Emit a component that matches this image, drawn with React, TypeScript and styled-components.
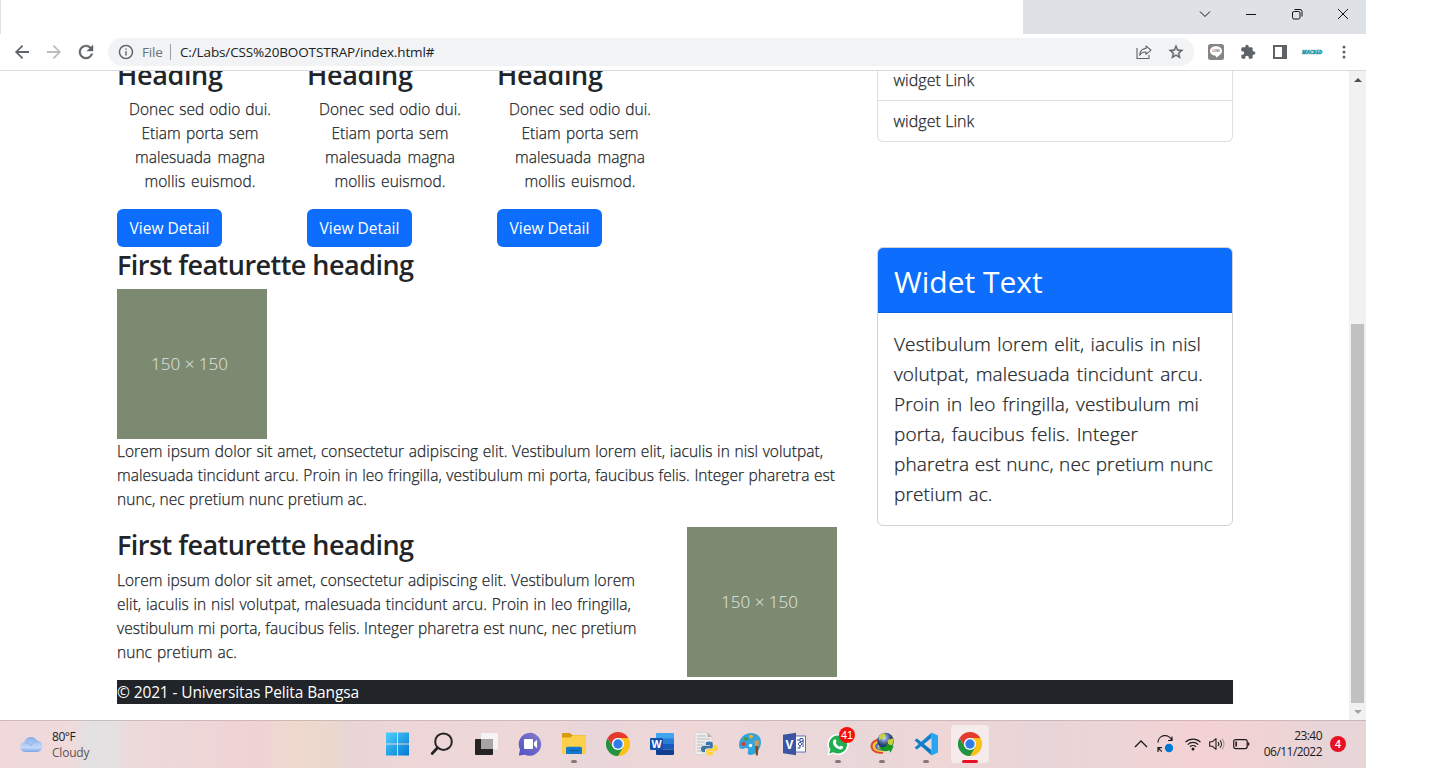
import React from 'react';
import styled, { createGlobalStyle, css } from 'styled-components';

const GlobalStyle = createGlobalStyle`
  *, *::before, *::after { box-sizing: border-box; }
  html, body { margin: 0; background: #fff; overflow: hidden; }
  body { font-family: 'Open Sans', 'Noto Sans', sans-serif; color: #212529; }
  h2, h3, p { margin: 0; }
  svg { display: block; flex: none; }
`;

const Screen = styled.div`
  width: 1366px;
  height: 768px;
  display: flex;
  flex-direction: column;
  overflow: hidden;
`;

/* ---------- browser chrome ---------- */

const TitleBar = styled.div`
  height: 34px;
  flex: none;
  display: flex;
  justify-content: space-between;
  background: #dee1e6;
  padding-left: 1px;
`;

const TabArea = styled.div`
  width: 1022px;
  background: #fff;
`;

const WindowControls = styled.div`
  display: flex;
  height: 28px;
`;

const WindowButton = styled.div`
  width: 46px;
  display: flex;
  align-items: center;
  justify-content: center;
`;

const Toolbar = styled.div`
  height: 37px;
  flex: none;
  display: flex;
  align-items: center;
  padding: 0 6px;
  border-bottom: 1px solid #d9dadb;
`;

const ToolButton = styled.div`
  width: 32px;
  height: 32px;
  display: flex;
  align-items: center;
  justify-content: center;
`;

const AddressBar = styled.div`
  width: 1086px;
  height: 28px;
  margin: 0 6px;
  padding: 0 2px 0 9px;
  border-radius: 14px;
  background: #f1f3f4;
  display: flex;
  align-items: center;
  font-size: 14px;
`;

const Scheme = styled.span`
  margin-left: 7px;
  width: 28px;
  color: #6b7075;
  font-size: 13.5px;
  letter-spacing: -0.15px;
`;

const Divider = styled.span`
  width: 1px;
  height: 16px;
  margin-right: 9px;
  background: #9a9da1;
`;

const Url = styled.span`
  flex: 1;
  color: #202124;
  font-size: 13.5px;
  letter-spacing: -0.13px;
`;

/* ---------- page ---------- */

const Viewport = styled.div`
  height: 649px;
  flex: none;
  display: flex;
  overflow: hidden;
`;

const Page = styled.div`
  width: 1349px;
  padding: 0 116px 0 117px;
  overflow: hidden;
`;

const Columns = styled.div`
  display: flex;
  justify-content: space-between;
  height: 609px;
`;

const Main = styled.div`
  width: 720px;
  margin-top: -15.6px;
`;

const Aside = styled.div`
  width: 356px;
`;

const Heading = styled.h3<{ $low?: boolean }>`
  height: 41.6px;
  padding-top: ${p => (p.$low ? '3px' : '1px')};
  font-size: 27px;
  line-height: 34px;
  font-weight: 600;
  letter-spacing: ${p => (p.$low ? '-0.35px' : '-0.53px')};
  white-space: nowrap;
`;

const Teasers = styled.div`
  display: flex;
  gap: 24px;
`;

const Teaser = styled.div`
  width: 166px;
`;

const TeaserText = styled.p`
  margin-bottom: 16px;
  display: flex;
  flex-direction: column;
  align-items: center;
`;

const Paragraph = styled.p`
  display: flex;
  flex-direction: column;
`;

const Line = styled.span<{ $width: number; $large?: boolean }>`
  width: ${p => p.$width}px;
  font-weight: 300;
  -webkit-text-stroke: 0.25px #212529;
  text-align: justify;
  text-align-last: justify;
  color: #212529;
  ${p => p.$large
    ? css`height: 30px; font-size: 19px; line-height: 30px; letter-spacing: 0.12px;`
    : css`height: 24px; font-size: 15.5px; line-height: 24px; letter-spacing: 0.04px;`}
`;

const Button = styled.button`
  width: 105px;
  height: 38px;
  display: block;
  padding: 0;
  border: 0;
  border-radius: 6px;
  background: #0d6efd;
  color: #fff;
  font: 400 15.5px/24px 'Open Sans', sans-serif;
`;

const Placeholder = styled.div`
  width: 150px;
  height: 150px;
  flex: none;
  display: flex;
  align-items: center;
  justify-content: center;
  padding: 0 5px 1px 0;
  background: #7d8a72;
  color: #e4e8e0;
  font-size: 17px;
  font-weight: 300;
`;

const Featurette = styled.article`
  display: flex;
  justify-content: space-between;
  margin-top: 16px;
`;

const LinkList = styled.div`
  height: 71px;
  border: 1px solid #dfdfdf;
  border-top: 0;
  border-radius: 0 0 6px 6px;
  overflow: hidden;
`;

const LinkItem = styled.div<{ $clipped?: boolean }>`
  height: 41px;
  padding: 8px 15.5px;
  margin-top: ${p => (p.$clipped ? '-11px' : '0')};
  border-bottom: ${p => (p.$clipped ? '1px solid #dfdfdf' : '0')};
  font-size: 16px;
  line-height: 24px;
  font-weight: 300;
  letter-spacing: 0.05px;
  -webkit-text-stroke: 0.25px #212529;
`;

const Card = styled.section`
  margin-top: 105px;
  height: 279px;
  border: 1px solid #d0d1d3;
  border-radius: 6px;
  overflow: hidden;
`;

const CardHeader = styled.h2`
  height: 65px;
  padding: 15px 16px 0;
  background: #0d6efd;
  border-bottom: 1px solid #0c5fd9;
  color: #fff;
  font-size: 30px;
  line-height: 38px;
  font-weight: 400;
`;

const CardBody = styled.div`
  padding: 16px 16px 0;
`;

const Footer = styled.footer`
  height: 24px;
  background: #212529;
  color: #fff;
  font-size: 15.5px;
  line-height: 24px;
  letter-spacing: -0.13px;
`;

const Scrollbar = styled.div`
  width: 17px;
  background: #f1f1f1;
  display: flex;
  flex-direction: column;
  align-items: center;
`;

const ScrollArrow = styled.div`
  height: 17px;
  display: flex;
  align-items: center;
`;

const ScrollTrack = styled.div`
  flex: 1;
  width: 13px;
  display: flex;
  align-items: flex-end;
`;

const ScrollThumb = styled.div`
  width: 13px;
  height: 379px;
  background: #c1c1c1;
`;

/* ---------- taskbar ---------- */

const Taskbar = styled.div`
  height: 48px;
  flex: none;
  display: flex;
  align-items: center;
  background: linear-gradient(90deg, #f0d8db 0, #efdadc 72px, #e3e1e1 88px, #e3e1e1 112px, #ecdadb 128px, #eed6d7 200px,
    #efd2d4 255px, #efd8cf 285px, #ebd9cd 325px, #e8d5d5 350px, #eed6d7 400px, #edd7d8 520px, #e9d6d8 600px, #efd7d8 690px, #e9d7d9 850px,
    #eed6d6 940px, #e8d5d7 1040px, #ecd5d6 1120px, #f4d2d4 1200px, #f0d3d4 1260px, #e7d5d7 1330px, #e7d5d7 1366px);
  box-shadow: inset 0 1px 0 rgba(150, 130, 135, 0.35);
`;

const Weather = styled.div`
  width: 376px;
  height: 100%;
  padding-left: 19px;
  display: flex;
  align-items: center;
  gap: 8px;
`;

const WeatherText = styled.div`
  display: flex;
  flex-direction: column;
  font-size: 12px;
  line-height: 16px;
  letter-spacing: -0.45px;
  color: #1b1b1b;
  padding-top: 2px;
`;

const Muted = styled.span`
  color: #5c5456;
  letter-spacing: -0.2px;
`;

const Apps = styled.div`
  width: 616px;
  display: flex;
`;

const AppCell = styled.div`
  width: 44px;
  height: 48px;
  display: flex;
  align-items: center;
  justify-content: center;
`;

const AppTile = styled.div<{ $active?: boolean }>`
  position: relative;
  width: 38px;
  height: 38px;
  border-radius: 4px;
  display: flex;
  align-items: center;
  justify-content: center;
  background: ${p => (p.$active ? '#f5ebeb' : 'transparent')};
`;

const Indicator = styled.span<{ $active?: boolean }>`
  position: absolute;
  bottom: 0;
  left: ${p => (p.$active ? '11px' : '16px')};
  width: ${p => (p.$active ? '16px' : '6px')};
  height: 3px;
  border-radius: 2px;
  background: ${p => (p.$active ? '#e81123' : '#85797b')};
`;

const CountBadge = styled.span`
  position: absolute;
  top: 2px;
  left: 20px;
  width: 16px;
  height: 16px;
  border-radius: 50%;
  background: #f5100c;
  color: #fff;
  font-size: 11px;
  line-height: 16px;
  text-align: center;
  font-family: 'Liberation Sans', sans-serif;
`;

const Tray = styled.div`
  flex: 1;
  display: flex;
  align-items: center;
  justify-content: flex-end;
  padding-right: 20px;
`;

const TrayIcons = styled.div`
  display: flex;
  align-items: center;
  gap: 8px;
  margin-right: 12px;
`;

const SyncStatus = styled.div`
  margin-right: 3px;
`;

const Clock = styled.div`
  width: 60px;
  display: flex;
  flex-direction: column;
  align-items: flex-end;
  font-size: 12px;
  line-height: 16px;
  letter-spacing: -0.55px;
  color: #1b1b1b;
`;

const Notice = styled.span`
  width: 16px;
  height: 16px;
  margin-left: 8px;
  border-radius: 50%;
  background: #e81123;
  color: #fff;
  font-size: 11px;
  font-weight: 600;
  line-height: 16px;
  text-align: center;
`;

/* ---------- icons ---------- */

interface GlyphProps { d: string; size: number; box?: number; fill?: string; weight?: number }

const Glyph = ({ d, size, box = 24, fill = '#5f6368', weight = 0 }: GlyphProps) => (
  <svg width={size} height={size} viewBox={`${12 - box / 2} ${12 - box / 2} ${box} ${box}`} fill={fill} stroke={fill} strokeWidth={weight}>
    <path d={d} />
  </svg>
);

const BACK = 'M20 11H7.83l5.59-5.59L12 4l-8 8 8 8 1.41-1.41L7.83 13H20v-2z';
const FORWARD = 'M12 4l-1.41 1.41L16.17 11H4v2h12.17l-5.58 5.59L12 20l8-8z';
const RELOAD = 'M17.65 6.35C16.2 4.9 14.21 4 12 4c-4.42 0-7.99 3.58-7.99 8s3.57 8 7.99 8c3.73 0 6.84-2.55 7.73-6h-2.08c-.82 2.33-3.04 4-5.65 4-3.31 0-6-2.69-6-6s2.69-6 6-6c1.66 0 3.14.69 4.22 1.78L13 11h7V4l-2.35 2.35z';
const INFO = 'M11 7h2v2h-2zm0 4h2v6h-2zm1-9C6.48 2 2 6.48 2 12s4.48 10 10 10 10-4.48 10-10S17.52 2 12 2zm0 18c-4.41 0-8-3.59-8-8s3.59-8 8-8 8 3.59 8 8-3.59 8-8 8z';
const STAR = 'M22 9.24l-7.19-.62L12 2 9.19 8.63 2 9.24l5.46 4.73L5.82 21 12 17.27 18.18 21l-1.63-7.03L22 9.24zM12 15.4l-3.76 2.27 1-4.28-3.32-2.88 4.38-.38L12 6.1l1.71 4.04 4.38.38-3.32 2.88 1 4.28L12 15.4z';
const PUZZLE = 'M20.5 11H19V7c0-1.1-.9-2-2-2h-4V3.5C13 2.12 11.88 1 10.5 1S8 2.12 8 3.5V5H4c-1.1 0-1.99.9-1.99 2v3.8H3.5c1.49 0 2.7 1.21 2.7 2.7s-1.21 2.7-2.7 2.7H2V20c0 1.1.9 2 2 2h3.8v-1.5c0-1.49 1.21-2.7 2.7-2.7 1.49 0 2.7 1.21 2.7 2.7V22H17c1.1 0 2-.9 2-2v-4h1.5c1.38 0 2.5-1.12 2.5-2.5S21.88 11 20.5 11z';

const ShareIcon = () => (
  <svg width="16" height="16" viewBox="0 0 16 16" fill="none" stroke="#5f6368" strokeWidth="1.1">
    <path d="M1 4v10.5h12V11" />
    <path d="M10 2l5 4.200-5 4.200V8C7 8 4.800 9 3.600 11.300 4 7.200 6 4.800 10 4.400z" strokeLinejoin="round" />
  </svg>
);

const LineIcon = () => (
  <svg width="16" height="16" viewBox="0 0 16 16">
    <rect width="16" height="16" rx="2.500" fill="#858585" />
    <path d="M8 2.200c3.400 0 6 2.100 6 4.700 0 2.700-3 4.700-5.200 6.400-.5.400-1 .2-.8-.4.200-.7 0-1.100-.6-1.200C4.300 11.300 2 9.400 2 6.900c0-2.600 2.600-4.700 6-4.700z" fill="#fff" />
    <text x="8" y="8.200" fontSize="3.400" fontWeight="700" fill="#808080" textAnchor="middle">LINE</text>
  </svg>
);

const PanelIcon = () => (
  <svg width="14" height="14" viewBox="0 0 14 14">
    <path d="M0 0h14v14H0zM2 2v10h7V2z" fill="#5f6368" fillRule="evenodd" />
  </svg>
);

const BrandIcon = () => (
  <svg width="26" height="10" viewBox="0 0 26 10">
    <text x="3" y="7" fontSize="5.500" fontWeight="800" fontStyle="italic" fill="#12b6c4" stroke="#1b8ba0" strokeWidth=".4" textLength="20" lengthAdjust="spacingAndGlyphs">MACBED</text>
  </svg>
);

const MenuIcon = () => (
  <svg width="4" height="14" viewBox="0 0 4 14" fill="#5f6368">
    <circle cx="2" cy="2" r="1.500" /><circle cx="2" cy="7" r="1.500" /><circle cx="2" cy="12" r="1.500" />
  </svg>
);

const ControlIcon = ({ d }: { d: string }) => (
  <svg width="12" height="12" viewBox="0 0 12 12" fill="none" stroke="#111" strokeWidth="1"><path d={d} /></svg>
);

const CONTROLS = [
  'M1 3.500l5 5 5-5',
  'M1 6.500h10',
  'M3.500 3.500h-.5a1.500 1.500 0 0 0-1.500 1.500v4.500A1.500 1.500 0 0 0 3 11h4.500A1.500 1.500 0 0 0 9 9.500V5a1.500 1.500 0 0 0-1.500-1.500zM3.500 1.500h5.500A2 2 0 0 1 11 3.500v5',
  'M1 1l10 10M11 1L1 11',
];

const CloudIcon = () => (
  <svg width="25" height="18" viewBox="0 0 25 18">
    <defs>
      <linearGradient id="cloud" x1="0" y1="0" x2="0" y2="1">
        <stop offset="0" stopColor="#86aeea" /><stop offset=".7" stopColor="#c2d9f9" /><stop offset="1" stopColor="#7fa6e4" />
      </linearGradient>
    </defs>
    <path d="M6 17a5 5 0 0 1-.7-9.900A7 7 0 0 1 18.300 5.800 5.700 5.700 0 0 1 19 17z" fill="url(#cloud)" />
    <path d="M6 8c3-.5 5 1 6 3 1-3 3.500-5 7-5" fill="none" stroke="#83a9e6" strokeWidth="1" opacity=".7" />
  </svg>
);

const StartIcon = () => (
  <svg width="24" height="24" viewBox="0 0 24 24">
    <defs>
      <linearGradient id="win" x1="0" y1="0" x2="1" y2="1">
        <stop offset="0" stopColor="#4fd0fb" /><stop offset="1" stopColor="#0078d4" />
      </linearGradient>
    </defs>
    <path d="M0 .500h11v11H0zM12 .500h11v11H12zM0 12.500h11v11H0zM12 12.500h11v11H12z" fill="url(#win)" />
  </svg>
);

const SearchIcon = () => (
  <svg width="24" height="24" viewBox="0 0 24 24" fill="none" stroke="#252525">
    <circle cx="13.500" cy="9.700" r="8.300" strokeWidth="2" />
    <path d="M7.500 15.800L2.200 21.500" strokeWidth="2.800" strokeLinecap="round" />
  </svg>
);

const TaskViewIcon = () => (
  <svg width="24" height="24" viewBox="0 0 24 24">
    <rect x="7" y="1" width="17" height="16" rx="1" fill="#f5f4f4" />
    <rect x="1" y="7" width="18" height="16" rx="1" fill="#242424" />
    <rect x="7" y="7" width="12" height="10" fill="#a5a3a3" />
  </svg>
);

const ChatIcon = () => (
  <svg width="24" height="24" viewBox="0 0 24 24">
    <defs>
      <linearGradient id="chat" x1="1" y1="0" x2="0" y2="1">
        <stop offset="0" stopColor="#5f9be0" /><stop offset=".25" stopColor="#7a71c9" /><stop offset="1" stopColor="#5152c4" />
      </linearGradient>
    </defs>
    <path d="M12 .700A11.500 11.500 0 1 1 7 22.700L.800 23.500 2 17.500A11.500 11.500 0 0 1 12 .700z" fill="url(#chat)" />
    <rect x="6" y="7" width="9" height="10" rx="1" fill="#fff" />
    <path d="M16 10.500l3-2.700v8.500l-3-2.700z" fill="#fff" />
  </svg>
);

const FolderIcon = () => (
  <svg width="24" height="24" viewBox="0 0 24 24">
    <path d="M0 2.200C0 1.500.500 1 1.200 1H8l2 2h13c.600 0 1 .4 1 1v6H0z" fill="#d99a0b" />
    <path d="M0 5.500h8.500L11 3.300h13V21c0 .6-.4 1-1 1H1c-.6 0-1-.4-1-1z" fill="#fcd04b" />
    <path d="M4 22v-5.500c0-1 .6-1.800 1.800-1.800h12.400c1.200 0 1.800.8 1.800 1.800V22z" fill="#1279cf" />
    <path d="M7 18h10v1.200H7z" fill="#075ba8" />
  </svg>
);

const ChromeIcon = () => (
  <svg width="24" height="24" viewBox="0 0 24 24">
    <path d="M12 12V6h10.400A12 12 0 0 1 12 24z" fill="#fbc116" />
    <path d="M1.600 6A12 12 0 0 0 12 24l5.200-9L12 12 6.800 15z" fill="#229342" />
    <path d="M1.600 6A12 12 0 0 1 22.400 6H12a6 6 0 0 0-5.200 9z" fill="#e33b2e" />
    <circle cx="12" cy="12" r="6" fill="#fff" />
    <circle cx="12" cy="12" r="4.700" fill="#2f7de9" />
  </svg>
);

const WordIcon = () => (
  <svg width="24" height="24" viewBox="0 0 24 24">
    <path d="M7 1h16a1 1 0 0 1 1 1v5H6V2a1 1 0 0 1 1-1z" fill="#41a5ee" />
    <path d="M6 6.500h18V12H6z" fill="#2b7cd3" />
    <path d="M6 12h18v5.500H6z" fill="#185abd" />
    <path d="M6 17.500h18V22a1 1 0 0 1-1 1H7a1 1 0 0 1-1-1z" fill="#103f91" />
    <rect y="6" width="13" height="12" rx="1" fill="#174fae" />
    <text x="6.500" y="15.700" fontSize="10.500" fontWeight="700" fill="#fff" textAnchor="middle">W</text>
  </svg>
);

const PythonIcon = () => (
  <svg width="24" height="24" viewBox="0 0 24 24">
    <path d="M1 .500h12.500L18 5v17.500H1z" fill="#ececec" stroke="#c9c4c4" strokeWidth=".5" />
    <path d="M13.500.500L18 5h-4.500z" fill="#b5b5b5" />
    <path d="M3 4h9M3 7h13M3 10h8M3 13h6M3 16h5M3 19h6" stroke="#bbb" strokeWidth="1" />
    <path d="M15 9.500c-3 0-3.200 1-3.200 2.200V13H16v.7H9.800C8 13.700 7 15 7 17s1 3.200 2.500 3.200H11V18.500c0-1.200 1-2 2.200-2H17c1 0 1.800-.8 1.800-1.800v-3c0-1.200-.8-2.200-3.800-2.200z" fill="#3b76a8" />
    <path d="M16 23.500c3 0 3.200-1 3.200-2.200V20H15v-.7h6.200c1.800 0 2.800-1.300 2.800-3.100s-1-3.200-2.500-3.200h-1.600v1.700c0 1.200-.9 2.100-2.100 2.100H14c-1 0-1.800.8-1.800 1.800v2.700c0 1.200.8 2.200 3.800 2.200z" fill="#ffd340" />
  </svg>
);

const PaintIcon = () => (
  <svg width="24" height="24" viewBox="0 0 24 24">
    <path d="M13 1c6 0 10 3.500 10 9 0 6-4 12-10 13-3 .3-4-2-3-4 1-2.500-1-3.500-3.500-2.500C3 18 1 16.500 1 13 1 6 6.500 1 13 1z" fill="#33a4dc" />
    <circle cx="5.500" cy="12" r="2" fill="#dc3b2c" /><circle cx="8" cy="7" r="2" fill="#4f9a35" />
    <circle cx="13" cy="4.500" r="2" fill="#efab2e" /><circle cx="12.500" cy="13.500" r="1.800" fill="#eef5fa" />
    <path d="M16.500 8.500h4.500l-.5 6h-3.500z" fill="#d39a54" />
    <path d="M17.300 14h3l-.4 8.500c0 1.500-2 1.500-2.100 0z" fill="#85471f" />
  </svg>
);

const VisioIcon = () => (
  <svg width="24" height="24" viewBox="0 0 24 24">
    <rect x="11" y="4" width="12.500" height="16" fill="#fff" stroke="#3955a3" strokeWidth=".8" />
    <path d="M15 8h3M18 6.500h3v3h-3zM16 12l2-2 2 2-2 2zM18 14v2h-2.500M21 8v7" fill="none" stroke="#3955a3" strokeWidth="1" />
    <path d="M1 2.800L14 .700v22.600L1 21.200z" fill="#3955a3" />
    <text x="7.500" y="16.500" fontSize="12" fontWeight="700" fill="#fff" textAnchor="middle">V</text>
  </svg>
);

const WhatsAppIcon = () => (
  <svg width="24" height="24" viewBox="0 0 24 24">
    <path d="M12 2a10.500 10.500 0 1 1-5 19.600L1 23.400l1.700-5.900A10.500 10.500 0 0 1 12 2z" fill="#fff" />
    <path d="M12 3.500a9 9 0 1 1-4.700 16.700l-4.100 1.200 1.200-4A9 9 0 0 1 12 3.500z" fill="#1faf50" />
    <path d="M8.500 7.500c.6-.4 1.300-.1 1.500.6l.5 1.400c.2.5-.8 1.200-.7 1.600.6 1.500 2 2.900 3.600 3.500.5.200 1.100-1.100 1.600-.9l1.900.9c.4.200.3 1.600-.6 2.200-1.200.9-2.700.7-4.300 0-2.200-1-4-2.900-4.800-4.900-.7-1.700-.1-3.600 1.300-4.400z" fill="#fff" />
  </svg>
);

const GlobeIcon = () => (
  <svg width="24" height="24" viewBox="0 0 24 24">
    <defs>
      <radialGradient id="globe" cx=".4" cy=".3" r=".7">
        <stop offset="0" stopColor="#e4eef8" /><stop offset=".25" stopColor="#7f9ac6" /><stop offset=".6" stopColor="#2f477f" /><stop offset="1" stopColor="#182850" />
      </radialGradient>
    </defs>
    <path d="M12 6C3.500 6.500-.5 11 .8 16c1.300 4 5.500 6 12.200 5.700v-4c-4 0-5.500-1-5.500-2.700 0-2.500 2-4 5-4z" fill="#df4a2c" />
    <path d="M12 8C5 8.700 1.800 12 2.800 15.600c1 3 4.500 4.600 10.200 4.500v-2.500c-4 0-5.500-1-5.500-2.600 0-2.500 2-4 5-4z" fill="#f3d038" />
    <path d="M12 10C7 10.500 4.300 12.500 5 15.300c.7 2.200 3.500 3.400 8 3.400v-1c-4 0-5.500-1-5.500-2.700 0-2 2-3.500 5-3.500z" fill="#6a6cc8" />
    <circle cx="15.500" cy="9" r="8.300" fill="url(#globe)" />
    <path d="M9 4.500c1-1.800 3-3.200 5-3.300l1.500 2-2.500 3.300-4 1.500zM17.500 8l5.800-1.800c.8 3.300-.3 6.300-2.300 8l-3-2.200z" fill="#c5d03c" />
    <path d="M7.500 14.500c3.800 1.800 7 1.200 9.500-1.200l-1.300-1.800 8 2.500-3.200 6.800-1.200-2.500c-4 2-8 1-11.800-3.800z" fill="#149a22" />
  </svg>
);

const CodeIcon = () => (
  <svg width="24" height="24" viewBox="0 0 24 24">
    <path d="M.600 8.300l2.200-1.900L17.500 18v5.200z" fill="#0879c4" />
    <path d="M.600 15.700l2.200 1.900L17.500 6V.800z" fill="#0b83cf" />
    <path d="M17.500.600L24 3.500v17l-6.500 2.900z" fill="#27a5f2" />
  </svg>
);

const SyncIcon = () => (
  <svg width="18" height="18" viewBox="0 0 18 18" fill="none" stroke="#1b1b1b" strokeWidth="1.200">
    <path d="M2 7.500A7 7 0 0 1 15.500 5M16 1.500V5.500h-4" />
    <path d="M6 16.500C4.500 15.800 3.300 15 2.500 13M2 17v-4.300h4" />
    <circle cx="13" cy="13" r="4.200" fill="#0078d7" stroke="none" />
  </svg>
);

const WifiIcon = () => (
  <svg width="16" height="16" viewBox="0 0 16 16" fill="none" stroke="#1b1b1b" strokeWidth="1.100">
    <path d="M.5 6.200a10.600 10.600 0 0 1 15 0M2.700 8.600a7.500 7.500 0 0 1 10.600 0M4.900 10.900a4.400 4.400 0 0 1 6.200 0" />
    <circle cx="8" cy="13" r="1.500" fill="#1b1b1b" stroke="none" />
  </svg>
);

const VolumeIcon = () => (
  <svg width="16" height="16" viewBox="0 0 16 16" fill="none" stroke="#1b1b1b" strokeWidth="1.100">
    <path d="M.7 5.700h2.800L7 2.700v10.600l-3.500-3H.700z" strokeLinejoin="round" />
    <path d="M9 6a3 3 0 0 1 0 4M11 4.300a5.500 5.500 0 0 1 0 7.400" />
    <path d="M13 2.700a8 8 0 0 1 0 10.600" stroke="#a8999b" />
  </svg>
);

const BatteryIcon = () => (
  <svg width="17" height="16" viewBox="0 0 17 16" fill="none" stroke="#1b1b1b" strokeWidth="1.200">
    <rect x=".7" y="3.600" width="13.500" height="9" rx="2" />
    <path d="M15.500 6.500v3" strokeWidth="1.600" /><path d="M3.200 5.600v5" strokeWidth="1.600" />
  </svg>
);

const APPS: { icon: React.FC; open?: boolean; active?: boolean; count?: number }[] = [
  { icon: StartIcon }, { icon: SearchIcon }, { icon: TaskViewIcon }, { icon: ChatIcon },
  { icon: FolderIcon, open: true }, { icon: ChromeIcon }, { icon: WordIcon }, { icon: PythonIcon },
  { icon: PaintIcon }, { icon: VisioIcon }, { icon: WhatsAppIcon, open: true, count: 41 },
  { icon: GlobeIcon, open: true }, { icon: CodeIcon, open: true }, { icon: ChromeIcon, open: true, active: true },
];

/* Each line of copy carries the measure it is set to. */
type Copy = [text: string, width: number][];

const TEASER: Copy = [
  ['Donec sed odio dui.', 142],
  ['Etiam porta sem', 117],
  ['malesuada magna', 130],
  ['mollis euismod.', 111],
];
const WIDE: Copy = [
  ['Lorem ipsum dolor sit amet, consectetur adipiscing elit. Vestibulum lorem elit, iaculis in nisl volutpat,', 706],
  ['malesuada tincidunt arcu. Proin in leo fringilla, vestibulum mi porta, faucibus felis. Integer pharetra est', 718],
  ['nunc, nec pretium nunc pretium ac.', 250],
];
const NARROW: Copy = [
  ['Lorem ipsum dolor sit amet, consectetur adipiscing elit. Vestibulum lorem', 518],
  ['elit, iaculis in nisl volutpat, malesuada tincidunt arcu. Proin in leo fringilla,', 514],
  ['vestibulum mi porta, faucibus felis. Integer pharetra est nunc, nec pretium', 519.5],
  ['nunc pretium ac.', 120],
];
const WIDGET: Copy = [
  ['Vestibulum lorem elit, iaculis in nisl', 307],
  ['volutpat, malesuada tincidunt arcu.', 309],
  ['Proin in leo fringilla, vestibulum mi', 305],
  ['porta, faucibus felis. Integer', 244],
  ['pharetra est nunc, nec pretium nunc', 319],
  ['pretium ac.', 98.5],
];

const Lines = ({ copy, large }: { copy: Copy; large?: boolean }) => (
  <>{copy.map(([text, width]) => <Line key={text} $width={width} $large={large}>{text}</Line>)}</>
);

export default function App() {
  return (
    <Screen>
      <GlobalStyle />
      <TitleBar>
        <TabArea />
        <WindowControls>
          {CONTROLS.map(d => <WindowButton key={d}><ControlIcon d={d} /></WindowButton>)}
        </WindowControls>
      </TitleBar>
      <Toolbar>
        <ToolButton><Glyph d={BACK} size={22} box={25} /></ToolButton>
        <ToolButton><Glyph d={FORWARD} size={22} box={25} fill="#babcbe" /></ToolButton>
        <ToolButton><Glyph d={RELOAD} size={22} box={25} weight={0.4} /></ToolButton>
        <AddressBar>
          <Glyph d={INFO} size={18} box={25} />
          <Scheme>File</Scheme>
          <Divider />
          <Url>C:/Labs/CSS%20BOOTSTRAP/index.html#</Url>
          <ToolButton><ShareIcon /></ToolButton>
          <ToolButton><Glyph d={STAR} size={18} box={25} weight={0.5} /></ToolButton>
        </AddressBar>
        <ToolButton><LineIcon /></ToolButton>
        <ToolButton><Glyph d={PUZZLE} size={16} /></ToolButton>
        <ToolButton><PanelIcon /></ToolButton>
        <ToolButton><BrandIcon /></ToolButton>
        <ToolButton><MenuIcon /></ToolButton>
      </Toolbar>

      <Viewport>
        <Page>
          <Columns>
            <Main>
              <Teasers>
                {[1, 2, 3].map(n => (
                  <Teaser key={n}>
                    <Heading $low>Heading</Heading>
                    <TeaserText><Lines copy={TEASER} /></TeaserText>
                    <Button>View Detail</Button>
                  </Teaser>
                ))}
              </Teasers>
              <Heading>First featurette heading</Heading>
              <Placeholder>150 × 150</Placeholder>
              <Paragraph><Lines copy={WIDE} /></Paragraph>
              <Featurette>
                <div>
                  <Heading>First featurette heading</Heading>
                  <Paragraph><Lines copy={NARROW} /></Paragraph>
                </div>
                <Placeholder>150 × 150</Placeholder>
              </Featurette>
            </Main>
            <Aside>
              <LinkList>
                <LinkItem $clipped>widget Link</LinkItem>
                <LinkItem>widget Link</LinkItem>
              </LinkList>
              <Card>
                <CardHeader>Widet Text</CardHeader>
                <CardBody>
                  <Paragraph><Lines copy={WIDGET} large /></Paragraph>
                </CardBody>
              </Card>
            </Aside>
          </Columns>
          <Footer>© 2021 - Universitas Pelita Bangsa</Footer>
        </Page>
        <Scrollbar>
          <ScrollArrow><svg width="8" height="4" viewBox="0 0 8 4"><path d="M0 4l4-4 4 4z" fill="#505050" /></svg></ScrollArrow>
          <ScrollTrack><ScrollThumb /></ScrollTrack>
          <ScrollArrow><svg width="8" height="4" viewBox="0 0 8 4"><path d="M0 0l4 4 4-4z" fill="#a3a3a3" /></svg></ScrollArrow>
        </Scrollbar>
      </Viewport>

      <Taskbar>
        <Weather>
          <CloudIcon />
          <WeatherText><span>80°F</span><Muted>Cloudy</Muted></WeatherText>
        </Weather>
        <Apps>
          {APPS.map(({ icon: Icon, open, active, count }, i) => (
            <AppCell key={i}>
              <AppTile $active={active}>
                <Icon />
                {count && <CountBadge>{count}</CountBadge>}
                {open && <Indicator $active={active} />}
              </AppTile>
            </AppCell>
          ))}
        </Apps>
        <Tray>
          <TrayIcons>
            <svg width="14" height="16" viewBox="0 0 14 16" fill="none" stroke="#1b1b1b" strokeWidth="1.300"><path d="M1 11l6-6 6 6" /></svg>
            <SyncStatus><SyncIcon /></SyncStatus>
            <WifiIcon /><VolumeIcon /><BatteryIcon />
          </TrayIcons>
          <Clock><span>23:40</span><span>06/11/2022</span></Clock>
          <Notice>4</Notice>
        </Tray>
      </Taskbar>
    </Screen>
  );
}
